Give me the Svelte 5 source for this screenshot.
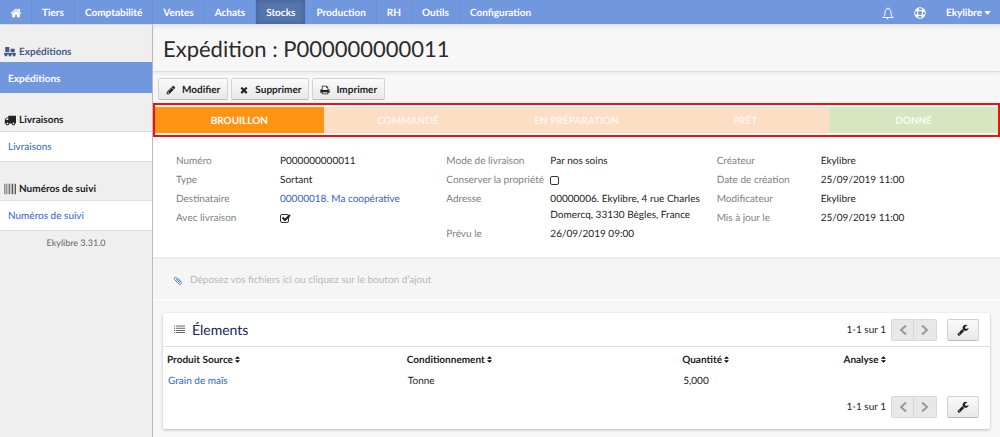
<script>
  const menu = ['Tiers', 'Comptabilité', 'Ventes', 'Achats', 'Stocks', 'Production', 'RH', 'Outils', 'Configuration'];
  const groups = [
    { title: 'Expéditions', icon: 'boxes', active: true },
    { title: 'Livraisons', icon: 'truck', active: false },
    { title: 'Numéros de suivi', icon: 'barcode', active: false }
  ];
  const steps = [
    { label: 'BROUILLON', kind: 'current' },
    { label: 'COMMANDÉ', kind: 'next' },
    { label: 'EN PRÉPARATION', kind: 'next' },
    { label: 'PRÊT', kind: 'next' },
    { label: 'DONNÉ', kind: 'final' }
  ];
  const details = [
    [
      { label: 'Numéro', value: 'P000000000011' },
      { label: 'Type', value: 'Sortant' },
      { label: 'Destinataire', value: '00000018. Ma coopérative', link: true },
      { label: 'Avec livraison', id: 'with-delivery', checked: true }
    ],
    [
      { label: 'Mode de livraison', value: 'Par nos soins' },
      { label: 'Conserver la propriété', id: 'keep-property', checked: false },
      { label: 'Adresse', value: '00000006. Ekylibre, 4 rue Charles Domercq, 33130 Bègles, France' },
      { label: 'Prévu le', value: '26/09/2019 09:00' }
    ],
    [
      { label: 'Créateur', value: 'Ekylibre' },
      { label: 'Date de création', value: '25/09/2019 11:00' },
      { label: 'Modificateur', value: 'Ekylibre' },
      { label: 'Mis à jour le', value: '25/09/2019 11:00' }
    ]
  ];
  const columns = ['Produit Source', 'Conditionnement', 'Quantité', 'Analyse'];
  const icons = {
    home: 'M1472 992v480q0 26-19 45t-45 19h-384v-384h-256v384h-384q-26 0-45-19t-19-45v-480q0-1 .5-3t.5-3l575-474 575 474q1 2 1 6zm223-69l-62 74q-8 9-21 11h-3q-13 0-21-7l-692-577-692 577q-12 8-24 7-13-2-21-11l-62-74q-8-10-7-23.5t11-21.5l719-599q32-26 76-26t76 26l244 204v-195q0-14 9-23t23-9h192q14 0 23 9t9 23v408l219 182q10 8 11 21.5t-7 23.5z',
    pencil: 'M491 1536l91-91-235-235-91 91v107h128v128h107zm523-928q0-22-22-22-10 0-17 7l-542 542q-7 7-7 17 0 22 22 22 10 0 17-7l542-542q7-7 7-17zm-54-192l416 416-832 832h-416v-416zm683 96q0 53-37 90l-166 166-416-416 166-165q36-38 90-38 53 0 91 38l235 234q37 39 37 91z',
    times: 'M1490 1322q0 40-28 68l-136 136q-28 28-68 28t-68-28l-294-294-294 294q-28 28-68 28t-68-28l-136-136q-28-28-28-68t28-68l294-294-294-294q-28-28-28-68t28-68l136-136q28-28 68-28t68 28l294 294 294-294q28-28 68-28t68 28l136 136q28 28 28 68t-28 68l-294 294 294 294q28 28 28 68z',
    print: 'M448 1536h896v-256h-896v256zm0-640h896v-384h-160q-40 0-68-28t-28-68v-160h-640v640zm1152 64q0-26-19-45t-45-19-45 19-19 45 19 45 45 19 45-19 19-45zm128 0v416q0 13-9.5 22.5t-22.5 9.5h-224v160q0 40-28 68t-68 28h-960q-40 0-68-28t-28-68v-160h-224q-13 0-22.5-9.5t-9.5-22.5v-416q0-79 56.5-135.5t135.5-56.5h64v-544q0-40 28-68t68-28h672q40 0 88 20t76 48l152 152q28 28 48 76t20 88v256h64q79 0 135.5 56.5t56.5 135.5z',
    truck: 'M640 1408q0-52-38-90t-90-38-90 38-38 90 38 90 90 38 90-38 38-90zm-384-512h384v-256h-158q-13 0-22 9l-195 195q-9 9-9 22v30zm1280 512q0-52-38-90t-90-38-90 38-38 90 38 90 90 38 90-38 38-90zm256-1088v1024q0 15-4 26.5t-13.5 18.5-16.5 11.5-23.5 6-22.5 2-25.5 0-22.5-.5q0 106-75 181t-181 75-181-75-75-181h-384q0 106-75 181t-181 75-181-75-75-181h-64q-3 0-22.5.5t-25.5 0-22.5-2-23.5-6-16.5-11.5-13.5-18.5-4-26.5q0-26 19-45t45-19v-320q0-8-.5-35t0-38 2.5-34.5 6.5-37 14-30.5 22.5-30l198-198q19-19 50.5-32t58.5-13h160v-192q0-26 19-45t45-19h1024q26 0 45 19t19 45z',
    wrench: 'M448 1472q0-26-19-45t-45-19-45 19-19 45 19 45 45 19 45-19 19-45zm644-420l-682 682q-37 37-90 37-52 0-91-37l-106-108q-38-36-38-90 0-53 38-91l681-681q39 98 114.5 173.5t173.5 114.5zm634-435q0 39-23 106-47 134-164.5 217.5t-258.5 83.5q-185 0-316.5-131.5t-131.5-316.5 131.5-316.5 316.5-131.5q58 0 121.5 16.5t107.5 46.5q16 11 16 28t-16 28l-293 169v224l193 107q5-3 79-48.5t135.5-81 70.5-35.5q15 0 23.500 10t8.500 25z',
    boxes: 'M180 160h620v780h-620zM1000 400h600v540h-600zM0 1060h1792v200h-1792zM100 1260h380v280h-380zM706 1260h380v280h-380zM1312 1260h380v280h-380z',
    list: 'M0 256h192v170h-192zM320 256h1472v170h-1472zM0 608h192v170h-192zM320 608h1472v170h-1472zM0 960h192v170h-192zM320 960h1472v170h-1472zM0 1312h192v170h-192zM320 1312h1472v170h-1472z',
    barcode: 'M0 128h90v1536h-90zM180 128h50v1536h-50zM360 128h130v1536h-130zM620 128h50v1536h-50zM780 128h140v1536h-140zM1040 128h60v1536h-60zM1200 128h160v1536h-160zM1470 128h50v1536h-50zM1620 128h170v1536h-170z'
  };
</script>

{#snippet icon(name, size)}
  <svg class="icon {name}" viewBox="0 0 1792 1792" width={size} height={size} aria-hidden="true"><path d={icons[name]} /></svg>
{/snippet}

{#snippet pager()}
  <div class="pager">
    <span>1-1 sur 1</span>
    <div class="pages">
      <button type="button" disabled aria-label="Page précédente">
        <svg viewBox="0 0 10 12" width="10" height="12"><path d="M8 1.500 3 6l5 4.500" /></svg>
      </button>
      <button type="button" disabled aria-label="Page suivante">
        <svg viewBox="0 0 10 12" width="10" height="12"><path d="M2 1.500 7 6l-5 4.500" /></svg>
      </button>
    </div>
    <button class="btn tool" type="button" aria-label="Options">{@render icon('wrench', 12)}</button>
  </div>
{/snippet}

<div class="page">
  <nav class="topbar">
    <a class="home" href="#home" aria-label="Accueil">{@render icon('home', 12)}</a>
    {#each menu as item}
      <a href="#{item}" class:active={item === 'Stocks'}>{item}</a>
    {/each}
    <div class="account">
      <button type="button" aria-label="Notifications">
        <svg viewBox="0 0 12 13" width="12" height="13" fill="none" stroke="currentColor"><path d="M6 .5v1M.8 10.500c1.700-1.300 2.200-3 2.200-5.300C3 3 4.200 1.600 6 1.600S9 3 9 5.200c0 2.300.5 4 2.200 5.300z" /><path d="M5 11c0 .8.4 1.300 1.200 1.300" /></svg>
      </button>
      <button type="button" aria-label="Aide">
        <svg viewBox="0 0 12 12" width="12" height="12" fill="none" stroke="currentColor"><circle cx="6" cy="6" r="5.300" /><circle cx="6" cy="6" r="2.600" /><circle cx="6" cy="6" r="4" stroke-width="3" stroke-dasharray="2.800 3.483" stroke-dashoffset="-1.740" /></svg>
      </button>
      <button type="button" class="user">Ekylibre<svg viewBox="0 0 8 5" width="7" height="4"><path d="M0 0h8L4 5z" fill="currentColor" /></svg></button>
    </div>
  </nav>

  <div class="columns">
    <aside>
      {#each groups as group}
        <section>
          <h2 class:active={group.active}>{@render icon(group.icon, 12)}{group.title}</h2>
          <a href="#{group.title}" class:active={group.active}>{group.title}</a>
        </section>
      {/each}
      <p>Ekylibre 3.31.0</p>
    </aside>

    <main>
      <header><h1>Expédition : P000000000011</h1></header>

      <div class="toolbar">
        <button class="btn" type="button">{@render icon('pencil', 10)}Modifier</button>
        <button class="btn" type="button">{@render icon('times', 10)}Supprimer</button>
        <button class="btn" type="button">{@render icon('print', 10)}Imprimer</button>
      </div>

      <ol class="steps">
        {#each steps as step}
          <li class={step.kind}>{step.label}</li>
        {/each}
      </ol>

      <div class="details">
        {#each details as group}
          <dl>
            {#each group as row}
              <dt>{#if row.id}<label for={row.id}>{row.label}</label>{:else}{row.label}{/if}</dt>
              <dd>
                {#if row.id}
                  <span class="check">
                    <input id={row.id} type="checkbox" checked={row.checked} />
                    <svg viewBox="0 0 11 10" width="11" height="10" aria-hidden="true"><path d="M2.500 4.500 5 7l5-5" /></svg>
                  </span>
                {:else if row.link}
                  <a href="#destinataire">{row.value}</a>
                {:else}
                  {row.value}
                {/if}
              </dd>
            {/each}
          </dl>
        {/each}
      </div>

      <button type="button" class="dropzone">
        <svg viewBox="0 0 10 10" width="9" height="9" aria-hidden="true"><path d="M3.200 3.200 6.600 6.700c.8.9 1.900-.3 1.100-1.100L4 1.900C2.400.4.300 2.400 1.800 4l4.400 4.400c2 1.800 4.300-.4 2.500-2.400L5.500 2.800" /></svg>
        Déposez vos fichiers ici ou cliquez sur le bouton d’ajout
      </button>

      <section class="card">
        <div class="card-head">
          <h2>{@render icon('list', 11)}Élements</h2>
          {@render pager()}
        </div>
        <table>
          <thead>
            <tr>
              {#each columns as column}
                <th scope="col">{column}<svg viewBox="0 0 6 8" width="5" height="7" aria-hidden="true"><path d="M3 0l3 3.200H0zM3 8l3-3.200H0z" /></svg></th>
              {/each}
            </tr>
          </thead>
          <tbody>
            <tr><td><a href="#grain">Grain de maïs</a></td><td>Tonne</td><td>5,000</td><td></td></tr>
          </tbody>
        </table>
        <div class="card-foot">{@render pager()}</div>
      </section>
    </main>
  </div>
</div>

<style>
  :global(body) { margin: 0; background: #f7f7f7; }
  :global(*) { box-sizing: border-box; }
  .page { display: flex; flex-direction: column; min-height: 100vh; font: 10px/16px Lato, sans-serif; color: #222; text-rendering: geometricPrecision; }
  a { color: #2f62d2; text-decoration: none; }
  button { font: inherit; color: inherit; cursor: pointer; text-rendering: inherit; }
  h1, h2, p, ol, dl, dd { margin: 0; padding: 0; font-weight: inherit; }
  svg { flex: none; }
  .icon { fill: currentColor; }

  .topbar { display: flex; height: 24px; background: #7197df; color: #fff; font-weight: 700; line-height: 24px; }
  .topbar > a { display: flex; align-items: center; padding: 2px 10px 0; color: inherit; border-right: 1px solid #6a8fd6; }
  .topbar > .home { padding: 2px 9px 0 10px; }
  .topbar > a:last-of-type { border-right: 0; }
  .topbar > a.active { background: #5474ad; box-shadow: inset 0 0 5px #3f5c90; }
  .account { display: flex; margin-left: auto; padding: 2px 9px 0 0; gap: 20px; }
  .account button { display: flex; align-items: center; padding: 0; border: 0; background: none; font-weight: 700; }
  .user svg { margin-left: 2px; }

  .columns { display: flex; flex: 1; }
  aside { width: 153px; flex: none; background: #efefef; border-right: 1px solid #bbb; border-top: 1px solid #ddd; }
  aside h2 { display: flex; align-items: center; gap: 3px; height: 37px; padding: 16px 4px 0; font-size: 10px; font-weight: 700; }
  aside h2.active { color: #46598a; }
  aside section + section h2 { height: 38px; }
  aside section a { display: block; height: 31px; padding: 0 8px; line-height: 30px; background: #fff; border: solid #ddd; border-width: 1px 0; }
  aside section a.active { padding-top: 1px; background: #7197df; color: #fff; font-weight: 700; border-color: #7197df; }
  aside p { padding-top: 4px; text-align: center; font-size: 9px; color: #666; }
  .barcode { fill: #555; }

  main { flex: 1; min-width: 0; background: #f7f7f7; }
  header { padding: 0 10px; height: 48px; border-bottom: 1px solid #ddd; box-shadow: 0 2px 3px #0000000d, inset 0 6px 6px -4px #0000001a; }
  h1 { font-size: 22px; line-height: 49px; color: #2b2b2b; }
  .toolbar { display: flex; gap: 3px; padding: 6px 5px 3px; }
  .btn { display: flex; align-items: center; justify-content: center; gap: 6px; height: 22px; padding: 1px 7px 0; border: 1px solid #d2d2d2; border-bottom-color: #bbb; border-radius: 2px; background: linear-gradient(#fafafa, #e8e8e8); font-weight: 700; }

  .steps { display: flex; list-style: none; padding: 2px 0; border: 2px solid #f80c0c; background: #fff; }
  .steps li { flex: 1; padding-top: 2px; text-align: center; line-height: 24px; font-weight: 700; color: #fff; }
  .steps .current { background: #ff9412; }
  .steps .next { background: #fbdec4; color: #fff6ee; }
  .steps .final { background: #d7e6c1; color: #f8fcf3; }

  .details { display: grid; grid-template-columns: repeat(3, 1fr); padding: 16px 13px 15px 23px; background: #fff; border-bottom: 2px solid #ebebeb; }
  dl { display: grid; grid-template-columns: 104px 1fr; align-content: start; row-gap: 3px; padding-right: 16px; }
  dt { color: #808080; }
  .check { position: relative; display: flex; align-items: center; width: 11px; height: 16px; }
  .check input { appearance: none; width: 9px; height: 9px; margin: 0; border: 1px solid #333; border-radius: 2px; }
  .check svg { position: absolute; left: 0; display: none; fill: none; stroke: #222; stroke-width: 2; pointer-events: none; }
  .check input:checked + svg { display: block; }

  .dropzone { display: flex; align-items: center; gap: 8px; width: 100%; height: 41px; padding: 2px 20px 0; border: 0; border-bottom: 1px solid #fff; background: #f5f5f5; color: #b8b8b8; }
  .dropzone svg { fill: none; stroke: #4a78d8; }

  .card { margin: 13px 10px 8px; background: #fff; border-radius: 2px; box-shadow: 0 1px 3px #00000040; }
  .card-head { display: flex; justify-content: space-between; align-items: center; height: 34px; padding: 0 11px; border-bottom: 1px solid #ddd; }
  .card h2 { display: flex; align-items: center; gap: 7px; font-size: 14px; color: #14265a; }
  .card h2 .icon { fill: #666; }
  .card-foot { display: flex; justify-content: flex-end; padding: 4px 11px 11px; }
  .pager { display: flex; align-items: center; gap: 5px; }
  .pages { display: flex; margin-right: 5px; }
  .pages button { display: flex; align-items: center; justify-content: center; width: 23px; height: 22px; padding: 0; border: 1px solid #d8d8d8; border-radius: 2px 0 0 2px; background: #e8e8e8; }
  .pages button + button { border-left: 0; border-radius: 0 2px 2px 0; }
  .pages svg { fill: none; stroke: #999; stroke-width: 2; }
  .tool { width: 32px; padding: 0; }

  table { width: 100%; table-layout: fixed; border-collapse: collapse; text-align: left; }
  th { padding: 2px 4px 0; height: 23px; font-weight: 700; }
  th:nth-child(1) { width: 29%; }
  th:nth-child(2) { width: 33.3%; }
  th:nth-child(3) { width: 19.5%; }
  th svg { margin-left: 2px; }
  td { height: 22px; padding: 0 5px; }
</style>
